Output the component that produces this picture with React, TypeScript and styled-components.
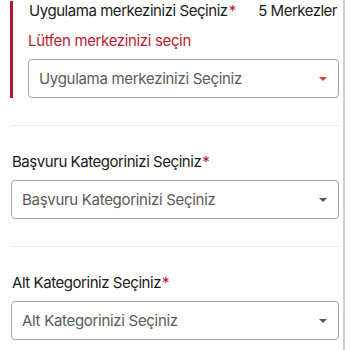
import React from "react";
import styled, { createGlobalStyle } from "styled-components";

const Global = createGlobalStyle`
  html, body { margin: 0; padding: 0; background: #fff; }
  body { font-family: Inter, "Noto Sans", sans-serif; }
`;

const Page = styled.div`
  width: 343px;
  height: 350px;
  overflow: hidden;
  border-right: 2px solid #cfcfcf;
  background: #fff;
`;

const Section = styled.section<{ $error?: boolean }>`
  display: flex;
  padding: ${(p) => (p.$error ? "1px 0 0 10px" : "26px 0 0 11px")};
`;

const ErrorBar = styled.div`
  width: 3px;
  background: #b3142e;
  flex-shrink: 0;
`;

const Body = styled.div<{ $error?: boolean }>`
  flex: 1;
  min-width: 0;
  display: flex;
  flex-direction: column;
  padding-left: ${(p) => (p.$error ? "15px" : "0")};
  padding-right: 4px;
`;

const LabelRow = styled.div<{ $tight?: boolean }>`
  display: flex;
  justify-content: space-between;
  align-items: center;
  white-space: nowrap;
  margin-bottom: ${(p) => (p.$tight ? "0" : "8px")};
`;

const Label = styled.label`
  font-size: 15px;
  line-height: 20px;
  letter-spacing: -0.45px;
  color: #1a1a1a;
  padding-left: 1px;
`;

const Star = styled.span`
  color: #b3142e;
  margin-left: 1px;
`;

const Count = styled.span`
  font-size: 15px;
  line-height: 20px;
  letter-spacing: -0.5px;
  color: #1a1a1a;
  margin-right: 2px;
`;

const ErrorText = styled.div`
  font-size: 15px;
  line-height: 20px;
  letter-spacing: -0.35px;
  color: #b71c33;
  margin: 10px 0 8px;
`;

const Select = styled.div`
  height: 37px;
  border: 1px solid #a3a3a3;
  border-radius: 4px;
  display: flex;
  align-items: center;
  justify-content: space-between;
  padding: 0 11px 0 10px;
`;

const Placeholder = styled.span`
  font-size: 15px;
  letter-spacing: -0.3px;
  color: #5a5a5a;
  white-space: nowrap;
`;

const Caret = styled.span<{ $color: string }>`
  width: 0;
  height: 0;
  border-left: 4px solid transparent;
  border-right: 4px solid transparent;
  border-top: 4px solid ${(p) => p.$color};
`;

const Divider = styled.hr`
  border: 0;
  height: 1px;
  background: #ececec;
  margin: 27px 3px 0 12px;
`;

export default function App() {
  return (
    <>
      <Global />
      <Page>
        <Section $error>
          <ErrorBar />
          <Body $error>
            <LabelRow $tight>
              <Label>
                Uygulama merkezinizi Seçiniz<Star>*</Star>
              </Label>
              <Count>5 Merkezler</Count>
            </LabelRow>
            <ErrorText>Lütfen merkezinizi seçin</ErrorText>
            <Select>
              <Placeholder>Uygulama merkezinizi Seçiniz</Placeholder>
              <Caret $color="#e0343f" />
            </Select>
          </Body>
        </Section>
        <Divider />
        <Section>
          <Body>
            <LabelRow>
              <Label>
                Başvuru Kategorinizi Seçiniz<Star>*</Star>
              </Label>
            </LabelRow>
            <Select>
              <Placeholder>Başvuru Kategorinizi Seçiniz</Placeholder>
              <Caret $color="#555" />
            </Select>
          </Body>
        </Section>
        <Divider />
        <Section>
          <Body>
            <LabelRow>
              <Label>
                Alt Kategoriniz Seçiniz<Star>*</Star>
              </Label>
            </LabelRow>
            <Select>
              <Placeholder>Alt Kategorinizi Seçiniz</Placeholder>
              <Caret $color="#555" />
            </Select>
          </Body>
        </Section>
      </Page>
    </>
  );
}
